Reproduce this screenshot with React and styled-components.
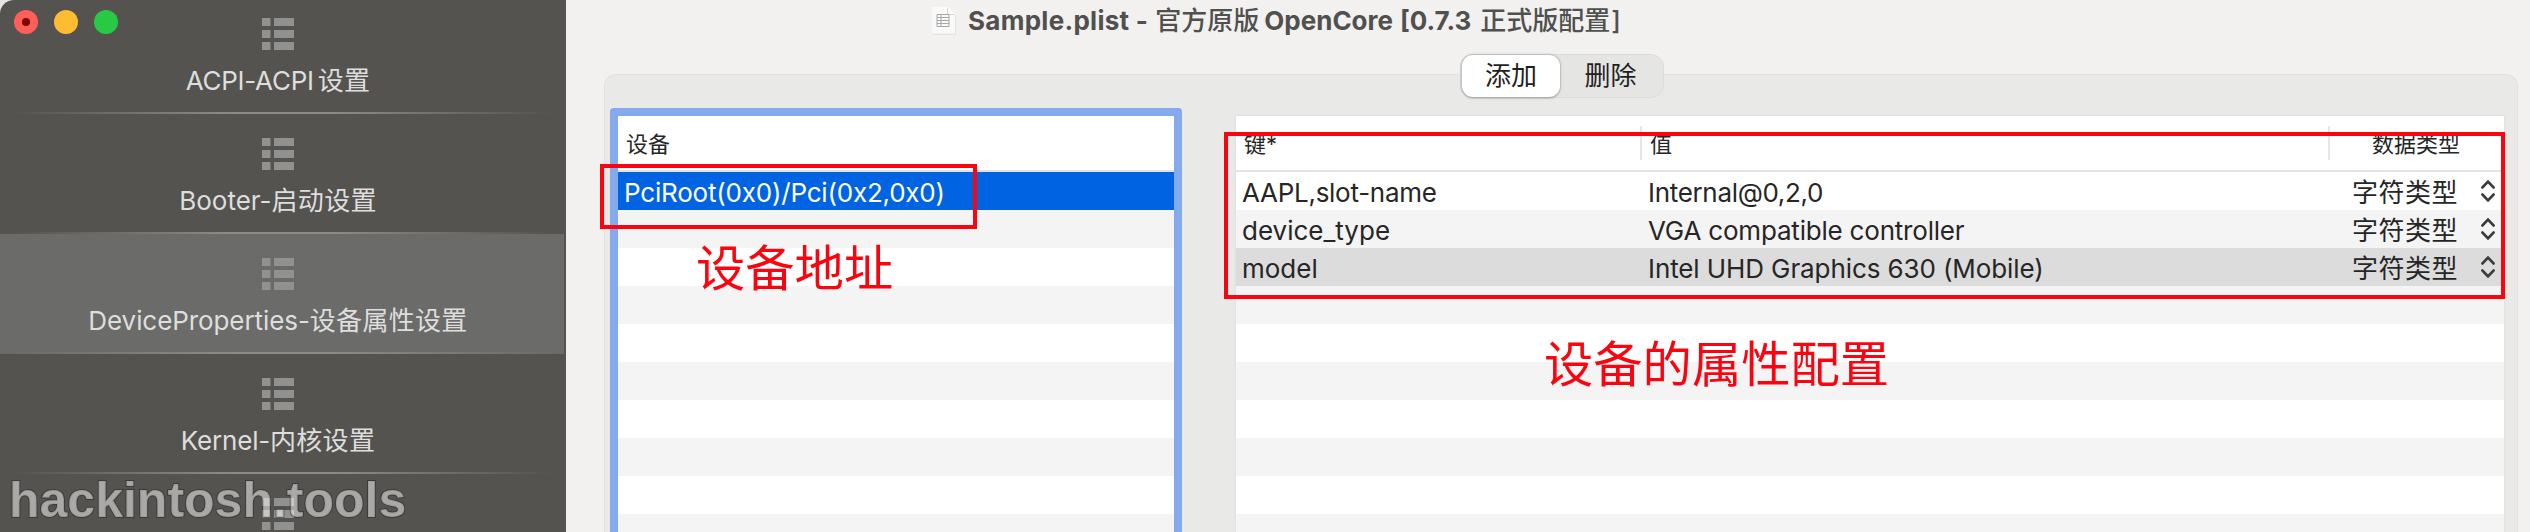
import React from "react";
import styled, { createGlobalStyle, css } from "styled-components";

const GlobalStyle = createGlobalStyle`
  *, *::before, *::after { box-sizing: border-box; }
  body {
    margin: 0;
    background: #e4e4e6;
    font-family: Inter, "Noto Sans CJK SC", sans-serif;
    font-size: 26px;
    color: #262626;
    overflow: hidden;
  }
`;

const Window = styled.div`
  position: relative;
  display: flex;
  width: 2530px;
  height: 532px;
  overflow: hidden;
  border-top-left-radius: 14px;
  background: #f2f1ef;
`;

/* ---------- sidebar ---------- */

const Sidebar = styled.nav`
  flex: none;
  width: 566px;
  height: 532px;
  overflow: hidden;
  padding-right: 2px;
  background: #545350;
`;

const TrafficLights = styled.div`
  position: absolute;
  top: 10px;
  left: 14px;
  display: flex;
  gap: 16px;
`;

const Light = styled.span`
  display: grid;
  place-items: center;
  width: 24px;
  height: 24px;
  border-radius: 50%;
  background: ${(p) => p.$color};

  &::after {
    content: "";
    width: 8px;
    height: 8px;
    border-radius: 50%;
    background: ${(p) => (p.$edited ? "#7d0503" : "transparent")};
  }
`;

const NavItem = styled.div`
  display: flex;
  flex-direction: column;
  align-items: center;
  height: ${(p) => (p.$first ? 114 : 120)}px;
  padding: ${(p) => (p.$first ? 18 : 24)}px 8px 0 0;
  background:
    linear-gradient(90deg, transparent 2%, #8a8a88 40%, #8a8a88 60%, transparent 98%) bottom / 100% 2px no-repeat,
    ${(p) => (p.$active ? "#6b6b6a" : "transparent")};
`;

const NavLabel = styled.span`
  margin-top: 14px;
  line-height: 33px;
  white-space: nowrap;
  color: #dededd;
  letter-spacing: ${(p) => p.$ls || 0}px;
`;

const Han = styled.span`
  margin-left: ${(p) => p.$gap || 0}px;
  letter-spacing: 0.3px;
`;

const ListGlyph = styled.svg`
  flex: none;
  width: 32px;
  height: 32px;
  fill: #91918f;
`;

const ListIcon = () => (
  <ListGlyph viewBox="0 0 32 32">
    {[0, 12, 24].map((y) => (
      <g key={y}>
        <rect x="0" y={y} width="8.5" height="8" />
        <rect x="12" y={y} width="20" height="8" />
      </g>
    ))}
  </ListGlyph>
);

const Watermark = styled.div`
  position: absolute;
  left: 9px;
  top: 472px;
  font: bold 50px/56px "Liberation Sans", sans-serif;
  color: rgba(255, 255, 255, 0.5);
  -webkit-text-stroke: 2px rgba(25, 25, 25, 0.4);
  paint-order: stroke fill;
  white-space: nowrap;
`;

/* ---------- main area ---------- */

const Main = styled.main`
  display: flex;
  flex-direction: column;
  width: 1964px;
  padding: 0 12px 0 38px;
`;

const TitleBar = styled.header`
  display: flex;
  align-items: center;
  height: 42px;
  margin-bottom: 32px;
  padding-left: 328px;
  font-weight: 700;
  color: #50504e;
  white-space: nowrap;
  line-height: 42px;
`;

const DocGlyph = styled.svg`
  flex: none;
  width: 24px;
  height: 28px;
  margin-right: 12px;
`;

const DocIcon = () => (
  <DocGlyph viewBox="0 0 24 28">
    <path d="M0 0h16l8 8v19H0z" fill="#f9f9f8" />
    <path d="M0 27.2h24M23.7 8v19" fill="none" stroke="#dededc" />
    <path d="M15.5 1v6.5h7" fill="none" stroke="#d3d3d1" />
    <path d="M5 7.5h12v12H5zM5 10.5h12M5 13.5h12M5 16.5h12M9 7.5v12" fill="none" stroke="#a6a7ab" />
  </DocGlyph>
);

const TitlePart = styled.span`
  margin-left: ${(p) => p.$gap || 0}px;
  letter-spacing: ${(p) => p.$ls || 0}px;
  font-weight: ${(p) => (p.$han ? 500 : 700)};
`;

const GroupBox = styled.section`
  display: flex;
  flex-direction: column;
  align-items: center;
  height: 470px;
  border: solid #e2e2e0;
  border-width: 1px 1px 0;
  border-radius: 12px 12px 0 0;
  background: #e9e9e7;
`;

const Segmented = styled.div`
  display: flex;
  flex: none;
  width: 204px;
  height: 44px;
  margin: -21px 0 18px 2px;
  padding: 1px 0 1px 1px;
  border: 1px solid #dcdcda;
  border-radius: 13px;
  background: #e5e5e3;
`;

const Segment = styled.button`
  width: ${(p) => (p.$selected ? 98 : 101)}px;
  height: 42px;
  margin-top: -1px;
  border: 0;
  padding: 0;
  border-radius: 11px;
  font: inherit;
  line-height: 40px;
  color: #1f1f1f;
  background: transparent;
  ${(p) =>
    p.$selected &&
    css`
      background: #fff;
      box-shadow: 0 0 2px 1px rgba(0, 0, 0, 0.18), 0 2px 2px rgba(0, 0, 0, 0.1);
    `}
`;

const Tables = styled.div`
  display: flex;
  gap: 62px;
  width: 100%;
  height: 430px;
  padding-left: 13px;
`;

const Table = styled.div`
  flex: none;
  width: ${(p) => p.$width}px;
  background: #fff;
  border-radius: ${(p) => (p.$focused ? "1px" : "0")};
  box-shadow: ${(p) => (p.$focused ? "0 0 0 8px #84a9ec" : "0 0 1px 1px #e2e2e0")};
`;

const HeaderRow = styled.div`
  display: grid;
  grid-template-columns: ${(p) => p.$cols};
  align-items: center;
  height: 56px;
  border-bottom: 2px solid #e3e3e3;
  font-size: 22px;
`;

const HeaderCell = styled.div`
  height: 34px;
  padding-left: ${(p) => p.$pad}px;
  line-height: 36px;
  border-left: ${(p) => (p.$divided ? "2px solid #e6e6e6" : "0")};
`;

const Row = styled.div`
  display: grid;
  grid-template-columns: ${(p) => p.$cols};
  height: 38px;
  line-height: 42px;
  white-space: nowrap;
  background: ${(p) => (p.$striped ? "#f4f4f4" : "#fff")};
  ${(p) => p.$marked && css`background: #dcdcdc;`}
  ${(p) => p.$selected && css`background: #0063e1; color: #fff;`}
`;

const Cell = styled.div`
  padding-left: ${(p) => p.$pad}px;
  letter-spacing: ${(p) => p.$ls || 0}px;
`;

const PathCell = styled(Cell)`
  font-feature-settings: "calt" 0;
`;

const TypeCell = styled.div`
  display: flex;
  align-items: center;
  justify-content: space-between;
  height: 38px;
  padding: 0 9px 0 24px;
  line-height: 38px;
`;

const TypeName = styled.span`
  padding-top: 3px;
  letter-spacing: 0.5px;
`;

const StepperGlyph = styled.svg`
  width: 14px;
  height: 22px;
  fill: none;
  stroke: #3c3c3c;
  stroke-width: 2.8;
  stroke-linecap: round;
  stroke-linejoin: round;
`;

const Stepper = () => (
  <StepperGlyph viewBox="0 0 14 22">
    <path d="M1.5 7.4 7 1.6l5.5 5.8M1.5 14.6 7 20.4l5.5-5.8" />
  </StepperGlyph>
);

/* ---------- annotations over the window ---------- */

const Callout = styled.div`
  position: absolute;
  left: ${(p) => p.$x}px;
  top: ${(p) => p.$y}px;
  width: ${(p) => p.$w}px;
  height: ${(p) => p.$h}px;
  border: 4px solid #fa0410;
`;

const CalloutText = styled.div`
  position: absolute;
  left: ${(p) => p.$x}px;
  top: ${(p) => p.$y}px;
  font: 400 49.3px/60px "Noto Sans CJK SC", sans-serif;
  color: #fa0410;
  white-space: nowrap;
`;

const navItems = [
  { latin: "ACPI-ACPI", han: "设置", ls: -0.25, gap: 4 },
  { latin: "Booter-", han: "启动设置" },
  { latin: "DeviceProperties-", han: "设备属性设置", ls: -0.08, active: true },
  { latin: "Kernel-", han: "内核设置", ls: -0.2 },
  { latin: "", han: "" },
];

const properties = [
  { key: "AAPL,slot-name", keyLs: -0.28, value: "Internal@0,2,0", ls: -0.32 },
  { key: "device_type", value: "VGA compatible controller", ls: -0.2 },
  { key: "model", value: "Intel UHD Graphics 630 (Mobile)", ls: -0.1, marked: true },
];

const deviceCols = "1fr";
const propertyCols = "404px 688px 1fr";

export default function App() {
  return (
    <>
      <GlobalStyle />
      <Window>
        <Sidebar>
          {navItems.map((item, i) => (
            <NavItem key={i} $first={i === 0} $active={item.active}>
              <ListIcon />
              {item.latin && (
                <NavLabel $ls={item.ls}>
                  {item.latin}
                  <Han $gap={item.gap}>{item.han}</Han>
                </NavLabel>
              )}
            </NavItem>
          ))}
        </Sidebar>
        <TrafficLights>
          <Light $color="#fe5f58" $edited />
          <Light $color="#febc30" />
          <Light $color="#29ca43" />
        </TrafficLights>

        <Main>
          <TitleBar>
            <DocIcon />
            <TitlePart $ls={0.28}>Sample.plist -</TitlePart>
            <TitlePart $gap={7} $han>官方原版</TitlePart>
            <TitlePart $gap={5}>OpenCore</TitlePart>
            <TitlePart $gap={7}>[0.7.3</TitlePart>
            <TitlePart $gap={9} $han>正式版配置</TitlePart>
            <TitlePart $gap={1} $han>]</TitlePart>
          </TitleBar>

          <GroupBox>
            <Segmented>
              <Segment $selected>添加</Segment>
              <Segment>删除</Segment>
            </Segmented>
            <Tables>
              <Table $width={556} $focused>
                <HeaderRow $cols={deviceCols}>
                  <HeaderCell $pad={8}>设备</HeaderCell>
                </HeaderRow>
                <Row $cols={deviceCols} $selected>
                  <PathCell $pad={6} $ls={-0.2}>PciRoot(0x0)/Pci(0x2,0x0)</PathCell>
                </Row>
                {Array.from({ length: 9 }, (_, i) => (
                  <Row key={i} $cols={deviceCols} $striped={i % 2 === 0} />
                ))}
              </Table>
              <Table $width={1268}>
                <HeaderRow $cols={propertyCols}>
                  <HeaderCell $pad={8}>键*</HeaderCell>
                  <HeaderCell $pad={8} $divided>值</HeaderCell>
                  <HeaderCell $pad={42} $divided>数据类型</HeaderCell>
                </HeaderRow>
                {properties.map((row, i) => (
                  <Row key={row.key} $cols={propertyCols} $striped={i % 2 === 1} $marked={row.marked}>
                    <Cell $pad={6} $ls={row.keyLs}>{row.key}</Cell>
                    <Cell $pad={8} $ls={row.ls}>{row.value}</Cell>
                    <TypeCell>
                      <TypeName>字符类型</TypeName>
                      <Stepper />
                    </TypeCell>
                  </Row>
                ))}
                {Array.from({ length: 7 }, (_, i) => (
                  <Row key={i} $cols={propertyCols} $striped={i % 2 === 0} />
                ))}
              </Table>
            </Tables>
          </GroupBox>
        </Main>

        <Callout $x={600} $y={164} $w={377} $h={65} />
        <Callout $x={1224} $y={132} $w={1281} $h={167} />
        <CalloutText $x={696} $y={235}>设备地址</CalloutText>
        <CalloutText $x={1544} $y={331}>设备的属性配置</CalloutText>
        <Watermark>hackintosh.tools</Watermark>
      </Window>
    </>
  );
}
